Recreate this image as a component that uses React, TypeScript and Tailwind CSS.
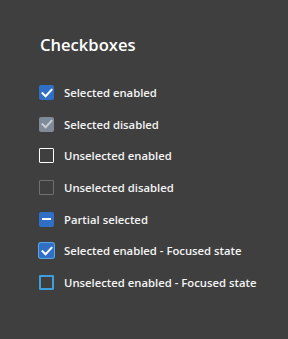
import React from "react";

type Kind = "checked" | "checkedDisabled" | "unchecked" | "uncheckedDisabled" | "partial" | "checkedFocus" | "uncheckedFocus";

function Box({ kind }: { kind: Kind }) {
  const check = (
    <svg width="12" height="10" viewBox="0 0 12 10" fill="none">
      <path d="M1.5 5.2 L4.6 8.2 L10.5 1.8" stroke="white" strokeWidth="2" strokeLinecap="square" />
    </svg>
  );
  if (kind === "checked")
    return <div className="w-[15px] h-[15px] rounded-[2px] bg-[#2f6fc5] flex items-center justify-center">{check}</div>;
  if (kind === "checkedFocus")
    return <div className="w-[15px] h-[15px] rounded-[2px] bg-[#2f6fc5] ring-1 ring-[#5aa6e0] flex items-center justify-center">{check}</div>;
  if (kind === "checkedDisabled")
    return (
      <div className="w-[15px] h-[15px] rounded-[2px] bg-[#7f8b98] flex items-center justify-center">
        <svg width="12" height="10" viewBox="0 0 12 10" fill="none">
          <path d="M1.5 5.2 L4.6 8.2 L10.5 1.8" stroke="#c7ccd2" strokeWidth="2" strokeLinecap="square" />
        </svg>
      </div>
    );
  if (kind === "partial")
    return (
      <div className="w-[15px] h-[15px] rounded-[2px] bg-[#2f6fc5] flex items-center justify-center">
        <div className="w-[9px] h-[2px] bg-white" />
      </div>
    );
  if (kind === "unchecked") return <div className="w-[15px] h-[15px] rounded-[1px] border border-white" />;
  if (kind === "uncheckedDisabled") return <div className="w-[15px] h-[15px] rounded-[1px] border border-[#6f6f6f]" />;
  return <div className="w-[15px] h-[15px] rounded-[1px] border-2 border-[#3e9fdc]" />;
}

const rows: { kind: Kind; label: string }[] = [
  { kind: "checked", label: "Selected enabled" },
  { kind: "checkedDisabled", label: "Selected disabled" },
  { kind: "unchecked", label: "Unselected enabled" },
  { kind: "uncheckedDisabled", label: "Unselected disabled" },
  { kind: "partial", label: "Partial selected" },
  { kind: "checkedFocus", label: "Selected enabled - Focused state" },
  { kind: "uncheckedFocus", label: "Unselected enabled - Focused state" },
];

export default function App() {
  return (
    <div
      className="w-[288px] h-[339px] bg-[#3f3f3f] text-white pl-[39px] pt-[33px]"
      style={{ fontFamily: '"Open Sans", "Noto Sans", sans-serif' }}
    >
      <div className="text-[16.6px] font-semibold leading-[24px] ml-[1px]">Checkboxes</div>
      <div className="mt-[20px] flex flex-col">
        {rows.map((r) => (
          <div key={r.label} className="h-[31.6px] flex items-center gap-[10px]">
            <Box kind={r.kind} />
            <span className="text-[11.3px] font-semibold leading-none text-[#f4f4f4]">{r.label}</span>
          </div>
        ))}
      </div>
    </div>
  );
}
